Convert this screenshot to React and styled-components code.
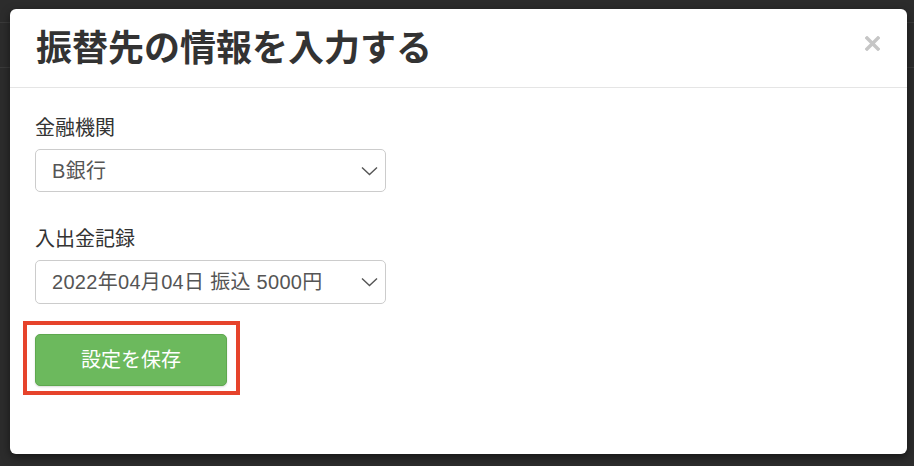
import React from "react";
import styled, { createGlobalStyle } from "styled-components";

const GlobalStyle = createGlobalStyle`
    html, body {
        margin: 0;
        padding: 0;
        background: #2c2c2c;
        font-family: "Liberation Sans", "Noto Sans CJK JP", sans-serif;
    }
`;

const Page = styled.div`
    position: relative;
    width: 914px;
    height: 466px;
    overflow: hidden;
    background: #2c2c2c;
`;

const TopBar = styled.div`
    height: 22px;
    border-bottom: 1px solid #3a3a3a;
`;

const SubBar = styled.div`
    height: 44px;
    border-bottom: 1px solid #3a3a3a;
`;

// the dialog lies over the page behind it
const Modal = styled.div`
    position: absolute;
    left: 10px;
    top: 9px;
    width: 897px;
    background: #fff;
    border-radius: 6px;
    box-shadow: 0 3px 9px rgba(0, 0, 0, 0.5);
    font-family: "Liberation Sans", "Noto Sans CJK JP", sans-serif;
`;

const Header = styled.div`
    display: flex;
    justify-content: space-between;
    align-items: flex-start;
    padding: 16px 27px 22px 26px;
    border-bottom: 1px solid #e5e5e5;
`;

const Title = styled.h3`
    margin: 0;
    font-family: "Noto Sans CJK JP", sans-serif;
    font-size: 36px;
    line-height: 40px;
    font-weight: 700;
    color: #333;
`;

const Close = styled.button`
    margin-top: 11px;
    padding: 0;
    border: 0;
    background: none;
    width: 15px;
    height: 15px;
    display: flex;
    cursor: pointer;
`;

const Body = styled.div`
    padding: 25px 25px 59px 25px;
`;

const Group = styled.div`
    margin-bottom: ${(p) => p.$gap || 0}px;
`;

const Label = styled.label`
    display: block;
    margin-bottom: 8px;
    font-family: "Noto Sans CJK JP", sans-serif;
    font-size: 20px;
    line-height: 28px;
    color: #333;
`;

const SelectWrap = styled.div`
    position: relative;
    width: 351px;
`;

const Select = styled.select`
    appearance: none;
    -webkit-appearance: none;
    display: block;
    width: 100%;
    height: ${(p) => p.$h}px;
    margin: 0;
    padding: 0 40px 0 16px;
    border: 1px solid #ccc;
    border-radius: 5px;
    background: #fff;
    font-family: "Liberation Sans", "Noto Sans CJK JP", sans-serif;
    font-size: 20px;
    letter-spacing: 0.3px;
    color: #555;
    outline: none;
`;

const Chevron = styled.svg`
    position: absolute;
    right: 8px;
    top: 50%;
    margin-top: -5px;
    pointer-events: none;
`;

const Highlight = styled.div`
    display: inline-block;
    margin: 17px 0 0 -12px;
    padding: 9px 9px 5px 8px;
    border: 4px solid #e6432b;
`;

const SaveButton = styled.button`
    display: block;
    width: 192px;
    height: 52px;
    padding: 0 0 3px;
    border: 1px solid #5ea84f;
    border-radius: 5px;
    background: #6cb95d;
    box-shadow: 0 1px 2px rgba(0, 0, 0, 0.15);
    font-family: "Noto Sans CJK JP", sans-serif;
    font-size: 20px;
    color: #fff;
    cursor: pointer;
`;

const ChevronIcon = () => (
    <Chevron width="17" height="10" viewBox="0 0 17 10">
        <path d="M1 1.5 L8.5 8.5 L16 1.5" fill="none" stroke="#555" strokeWidth="1.4" />
    </Chevron>
);

const Field = ({ label, value, height, gap }) => (
    <Group $gap={gap}>
        <Label>{label}</Label>
        <SelectWrap>
            <Select $h={height} defaultValue={value}>
                <option>{value}</option>
            </Select>
            <ChevronIcon />
        </SelectWrap>
    </Group>
);

export default function App() {
    return (
        <Page>
            <GlobalStyle />
            <TopBar />
            <SubBar />

            <Modal>
                <Header>
                    <Title>振替先の情報を入力する</Title>
                    <Close aria-label="閉じる">
                        <svg width="15" height="15" viewBox="0 0 15 15">
                            <path d="M2 2 L13 13 M13 2 L2 13" stroke="#c6c6c6" strokeWidth="3.4" strokeLinecap="square" />
                        </svg>
                    </Close>
                </Header>
                <Body>
                    <Field label="金融機関" value="B銀行" height={43} gap={32} />
                    <Field label="入出金記録" value="2022年04月04日 振込 5000円" height={44} />
                    <Highlight>
                        <SaveButton>設定を保存</SaveButton>
                    </Highlight>
                </Body>
            </Modal>
        </Page>
    );
}
